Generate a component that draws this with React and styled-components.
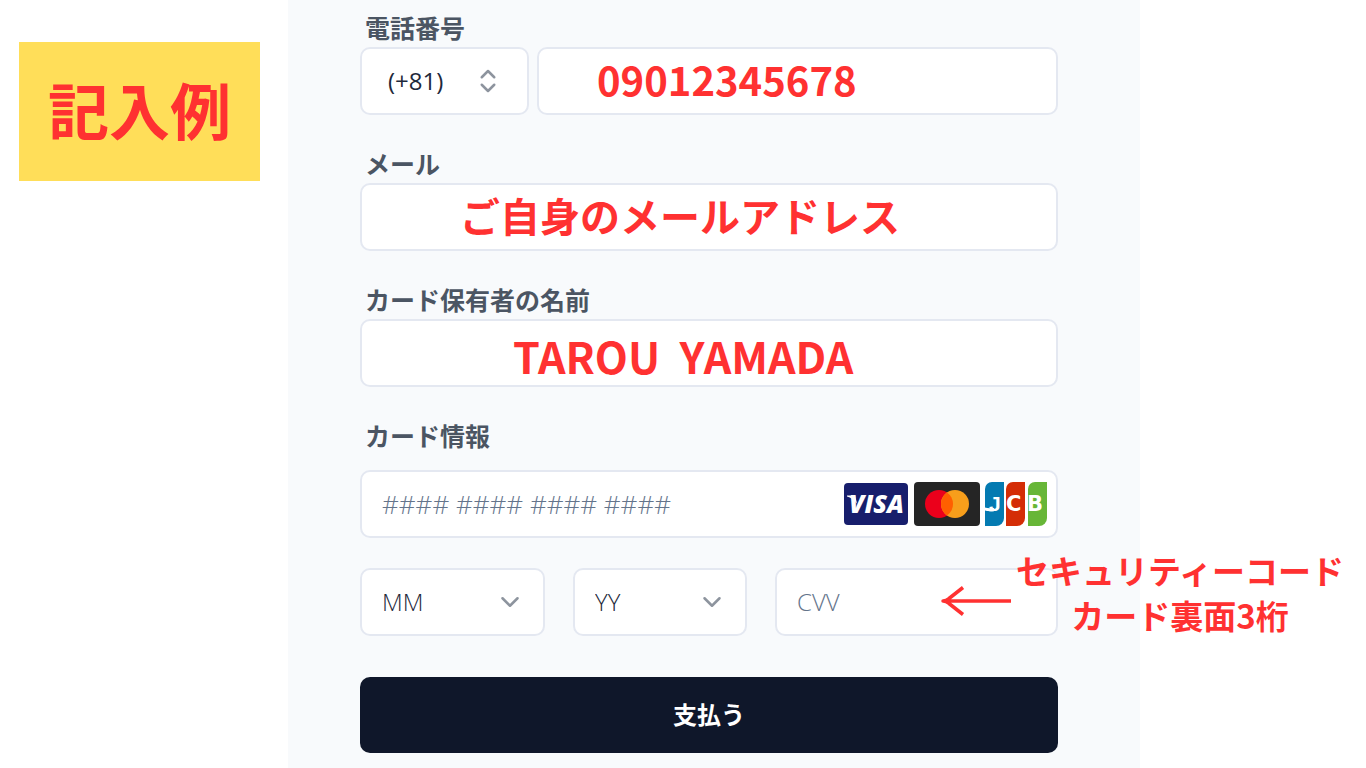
import { useState } from 'react'
import styled, { createGlobalStyle, css } from 'styled-components'
import { ChevronDown, ChevronsUpDown } from 'lucide-react'

const COLORS = {
  PANEL: '#f8fafc',
  BORDER: '#e4e8f1',
  LABEL: '#4b5563',
  TEXT: '#1e293b',
  PLACEHOLDER: '#64748b',
  ICON: '#8d949e',
  NAVY: '#0f172a',
  RED: '#ff3131',
  YELLOW: '#ffde59'
}
const JP_FONT = `'Noto Sans CJK JP', sans-serif`
const LATIN_FONT = `'Open Sans', 'Noto Sans CJK JP', sans-serif`

const GlobalStyle = createGlobalStyle`
  *, *::before, *::after {
    box-sizing: border-box;
  }
  body {
    margin: 0;
    background: #fff;
    font-family: ${JP_FONT};
  }
`

const VisaLogo = () => (
  <svg width="65" height="44" viewBox="0 0 65 44" role="img" aria-label="Visa">
    <rect y="1" width="64" height="42" rx="4" fill="#171e6c" />
    <path d="M3 13.500h8l2 8C10 18 7 15.500 3 14.500z" fill="#fff" />
    <VisaText x="5" y="31">VISA</VisaText>
  </svg>
)

const MastercardLogo = () => (
  <svg width="66" height="44" viewBox="0 0 66 44" role="img" aria-label="Mastercard">
    <rect width="66" height="44" rx="4" fill="#252525" />
    <circle cx="25" cy="22" r="14" fill="#eb001b" />
    <circle cx="41" cy="22" r="14" fill="#f79e1b" />
    <path d="M33 10.500a14 14 0 0 1 0 23a14 14 0 0 1 0-23z" fill="#ff5f00" />
  </svg>
)

const JcbLogo = () => (
  <svg width="63" height="44" viewBox="0 0 63 44" role="img" aria-label="JCB">
    <path d="M7 0h12v36a8 8 0 0 1-8 8H0V7a7 7 0 0 1 7-7z" fill="#047ab1" />
    <path d="M28 0h12v36a8 8 0 0 1-8 8H21V7a7 7 0 0 1 7-7z" fill="#d42d06" />
    <path d="M50 0h12v36a8 8 0 0 1-8 8H43V7a7 7 0 0 1 7-7z" fill="#67b637" />
    <path d="M0 25.500c2 .800 5 1 9 .500v3.200c-4 .400-7 .100-9-.700z" fill="#fff" />
    <JcbText $narrow x="4" y="29">J</JcbText>
    <JcbText x="21" y="29">C</JcbText>
    <JcbText x="42" y="29">B</JcbText>
  </svg>
)

const SelectBox = ({ label, options, icon: Icon, $regular, $iconRight }) => {
  const [value, setValue] = useState(options[0])

  return (
    <SelectWrap>
      <Select
        aria-label={label}
        value={value}
        onChange={e => setValue(e.target.value)}
        $regular={$regular}>
        {options.map(option => <option key={option}>{option}</option>)}
      </Select>
      <SelectIcon $right={$iconRight}>
        <Icon size={30} strokeWidth={2} />
      </SelectIcon>
    </SelectWrap>
  )
}

const MONTHS = ['MM', ...Array.from({ length: 12 }, (_, i) => String(i + 1).padStart(2, '0'))]
const YEARS = ['YY', ...Array.from({ length: 10 }, (_, i) => String(i + 25))]

const App = () => (
  <>
    <GlobalStyle />
    <Page>
      <Side>
        <Badge>記入例</Badge>
      </Side>
      <Panel>
        <Form onSubmit={e => e.preventDefault()}>
          <Field>
            <Label htmlFor="phone">電話番号</Label>
            <PhoneRow>
              <SelectBox
                label="国番号"
                options={['(+81)', '(+1)', '(+44)']}
                icon={ChevronsUpDown}
                $regular
                $iconRight={26} />
              <Input id="phone" type="tel" defaultValue="09012345678" $indent={58} />
            </PhoneRow>
          </Field>
          <Field>
            <Label htmlFor="email">メール</Label>
            <Input id="email" type="text" defaultValue="ご自身のメールアドレス" $indent={98} />
          </Field>
          <Field>
            <Label htmlFor="holder">カード保有者の名前</Label>
            <Input id="holder" type="text" defaultValue="TAROU  YAMADA" $indent={151} $large />
          </Field>
          <Field $spaced>
            <Label htmlFor="card">カード情報</Label>
            <CardBox>
              <CardInput id="card" type="text" placeholder="#### #### #### ####" />
              <VisaLogo />
              <MastercardLogo />
              <JcbLogo />
            </CardBox>
          </Field>
          <ExpiryRow>
            <SelectBox label="月" options={MONTHS} icon={ChevronDown} $iconRight={20} />
            <SelectBox label="年" options={YEARS} icon={ChevronDown} $iconRight={20} />
            <CvvWrap>
              <CvvInput type="text" placeholder="CVV" aria-label="CVV" />
              <Callout>
                <svg width="72" height="30" viewBox="0 0 72 30" fill="none" stroke={COLORS.RED} strokeWidth="3.500">
                  <path d="M70 15H3M22 1.500L8 12.500Q5 15 2 15Q5 15 8 17.500L22 28.500" strokeLinejoin="round" />
                </svg>
                <p>セキュリティーコード<br />カード裏面3桁</p>
              </Callout>
            </CvvWrap>
          </ExpiryRow>
          <PayButton type="submit">支払う</PayButton>
        </Form>
      </Panel>
    </Page>
  </>
)

const Page = styled.div`
  display: grid;
  grid-template-columns: 288fr 852fr 226fr;
  min-height: 100vh;
  overflow-x: hidden;
`

const Side = styled.aside`
  padding: 42px 28px 0 19px;
`

const Badge = styled.div`
  display: flex;
  align-items: center;
  justify-content: center;
  height: 139px;
  padding-bottom: 6px;
  background: ${COLORS.YELLOW};
  color: ${COLORS.RED};
  font-size: 61px;
  font-weight: 700;
  white-space: nowrap;
`

const Panel = styled.main`
  padding: 9px 82px 14px 72px;
  background: ${COLORS.PANEL};
`

const Form = styled.form`
  display: flex;
  flex-direction: column;
`

const Field = styled.div`
  display: flex;
  flex-direction: column;
  gap: ${({ $spaced }) => $spaced ? '17px' : '2px'};
  margin-bottom: 30px;
`

const Label = styled.label`
  padding-left: 5px;
  color: ${COLORS.LABEL};
  font-size: 25px;
  font-weight: 700;
  line-height: 36px;
`

const boxStyle = css`
  width: 100%;
  min-width: 0;
  height: 68px;
  border: 2px solid ${COLORS.BORDER};
  border-radius: 10px;
  background: #fff;
`

const Input = styled.input`
  ${boxStyle}
  padding: ${({ $large }) => $large ? '4px 0 0' : '0 0 4px'};
  padding-left: ${({ $indent }) => $indent}px;
  color: ${COLORS.RED};
  font-family: ${JP_FONT};
  font-size: ${({ $large }) => $large ? 43 : 40}px;
  font-weight: 700;
`

const PhoneRow = styled.div`
  display: grid;
  grid-template-columns: 169fr 521fr;
  gap: 8px;
`

const SelectWrap = styled.div`
  position: relative;
  min-width: 0;
`

const Select = styled.select`
  ${boxStyle}
  appearance: none;
  padding: 0 0 2px ${({ $regular }) => $regular ? 26 : 20}px;
  color: ${COLORS.TEXT};
  font-family: ${LATIN_FONT};
  font-size: 24px;
  font-weight: ${({ $regular }) => $regular ? 400 : 300};
`

const SelectIcon = styled.span`
  position: absolute;
  top: 0;
  right: ${({ $right }) => $right}px;
  display: flex;
  align-items: center;
  height: 100%;
  color: ${COLORS.ICON};
  pointer-events: none;
`

const CardBox = styled.div`
  ${boxStyle}
  display: flex;
  align-items: center;
  gap: 5px;
  padding: 0 8px 0 20px;
`

const plainText = css`
  color: ${COLORS.TEXT};
  font-family: ${LATIN_FONT};
  font-size: 24px;
  font-weight: 300;

  &::placeholder {
    color: ${COLORS.PLACEHOLDER};
  }
`

const CardInput = styled.input`
  ${plainText}
  flex: 1;
  min-width: 0;
  padding: 0;
  border: 0;
  outline: 0;
  background: none;
  font-size: 26px;
`

const VisaText = styled.text`
  fill: #fff;
  font-family: 'Open Sans', sans-serif;
  font-size: 25px;
  font-style: italic;
  font-weight: 800;
`

const JcbText = styled.text`
  fill: #fff;
  font-family: ${({ $narrow }) => $narrow ? `'Liberation Sans'` : `'DejaVu Sans'`}, sans-serif;
  font-size: 21px;
  font-weight: 700;
`

const ExpiryRow = styled.div`
  display: grid;
  grid-template-columns: 185fr 174fr 283fr;
  gap: 28px;
  margin-bottom: 41px;
`

const CvvWrap = styled.div`
  position: relative;
`

const CvvInput = styled.input`
  ${boxStyle}
  ${plainText}
  padding: 0 0 2px 20px;
`

/* Runs out over the edge of the panel, next to the CVV box */
const Callout = styled.div`
  position: absolute;
  top: -20px;
  right: -286px;
  display: flex;
  align-items: center;
  gap: 3px;
  color: ${COLORS.RED};
  pointer-events: none;

  svg {
    flex: none;
    margin-top: 16px;
  }

  p {
    margin: 0;
    font-size: 33px;
    font-weight: 700;
    line-height: 45px;
    text-align: center;
    white-space: nowrap;
  }
`

const PayButton = styled.button`
  height: 76px;
  padding-bottom: 4px;
  border: 0;
  border-radius: 10px;
  background: ${COLORS.NAVY};
  color: #fff;
  font-family: ${JP_FONT};
  font-size: 24px;
  font-weight: 700;
  cursor: pointer;
`

export default App
